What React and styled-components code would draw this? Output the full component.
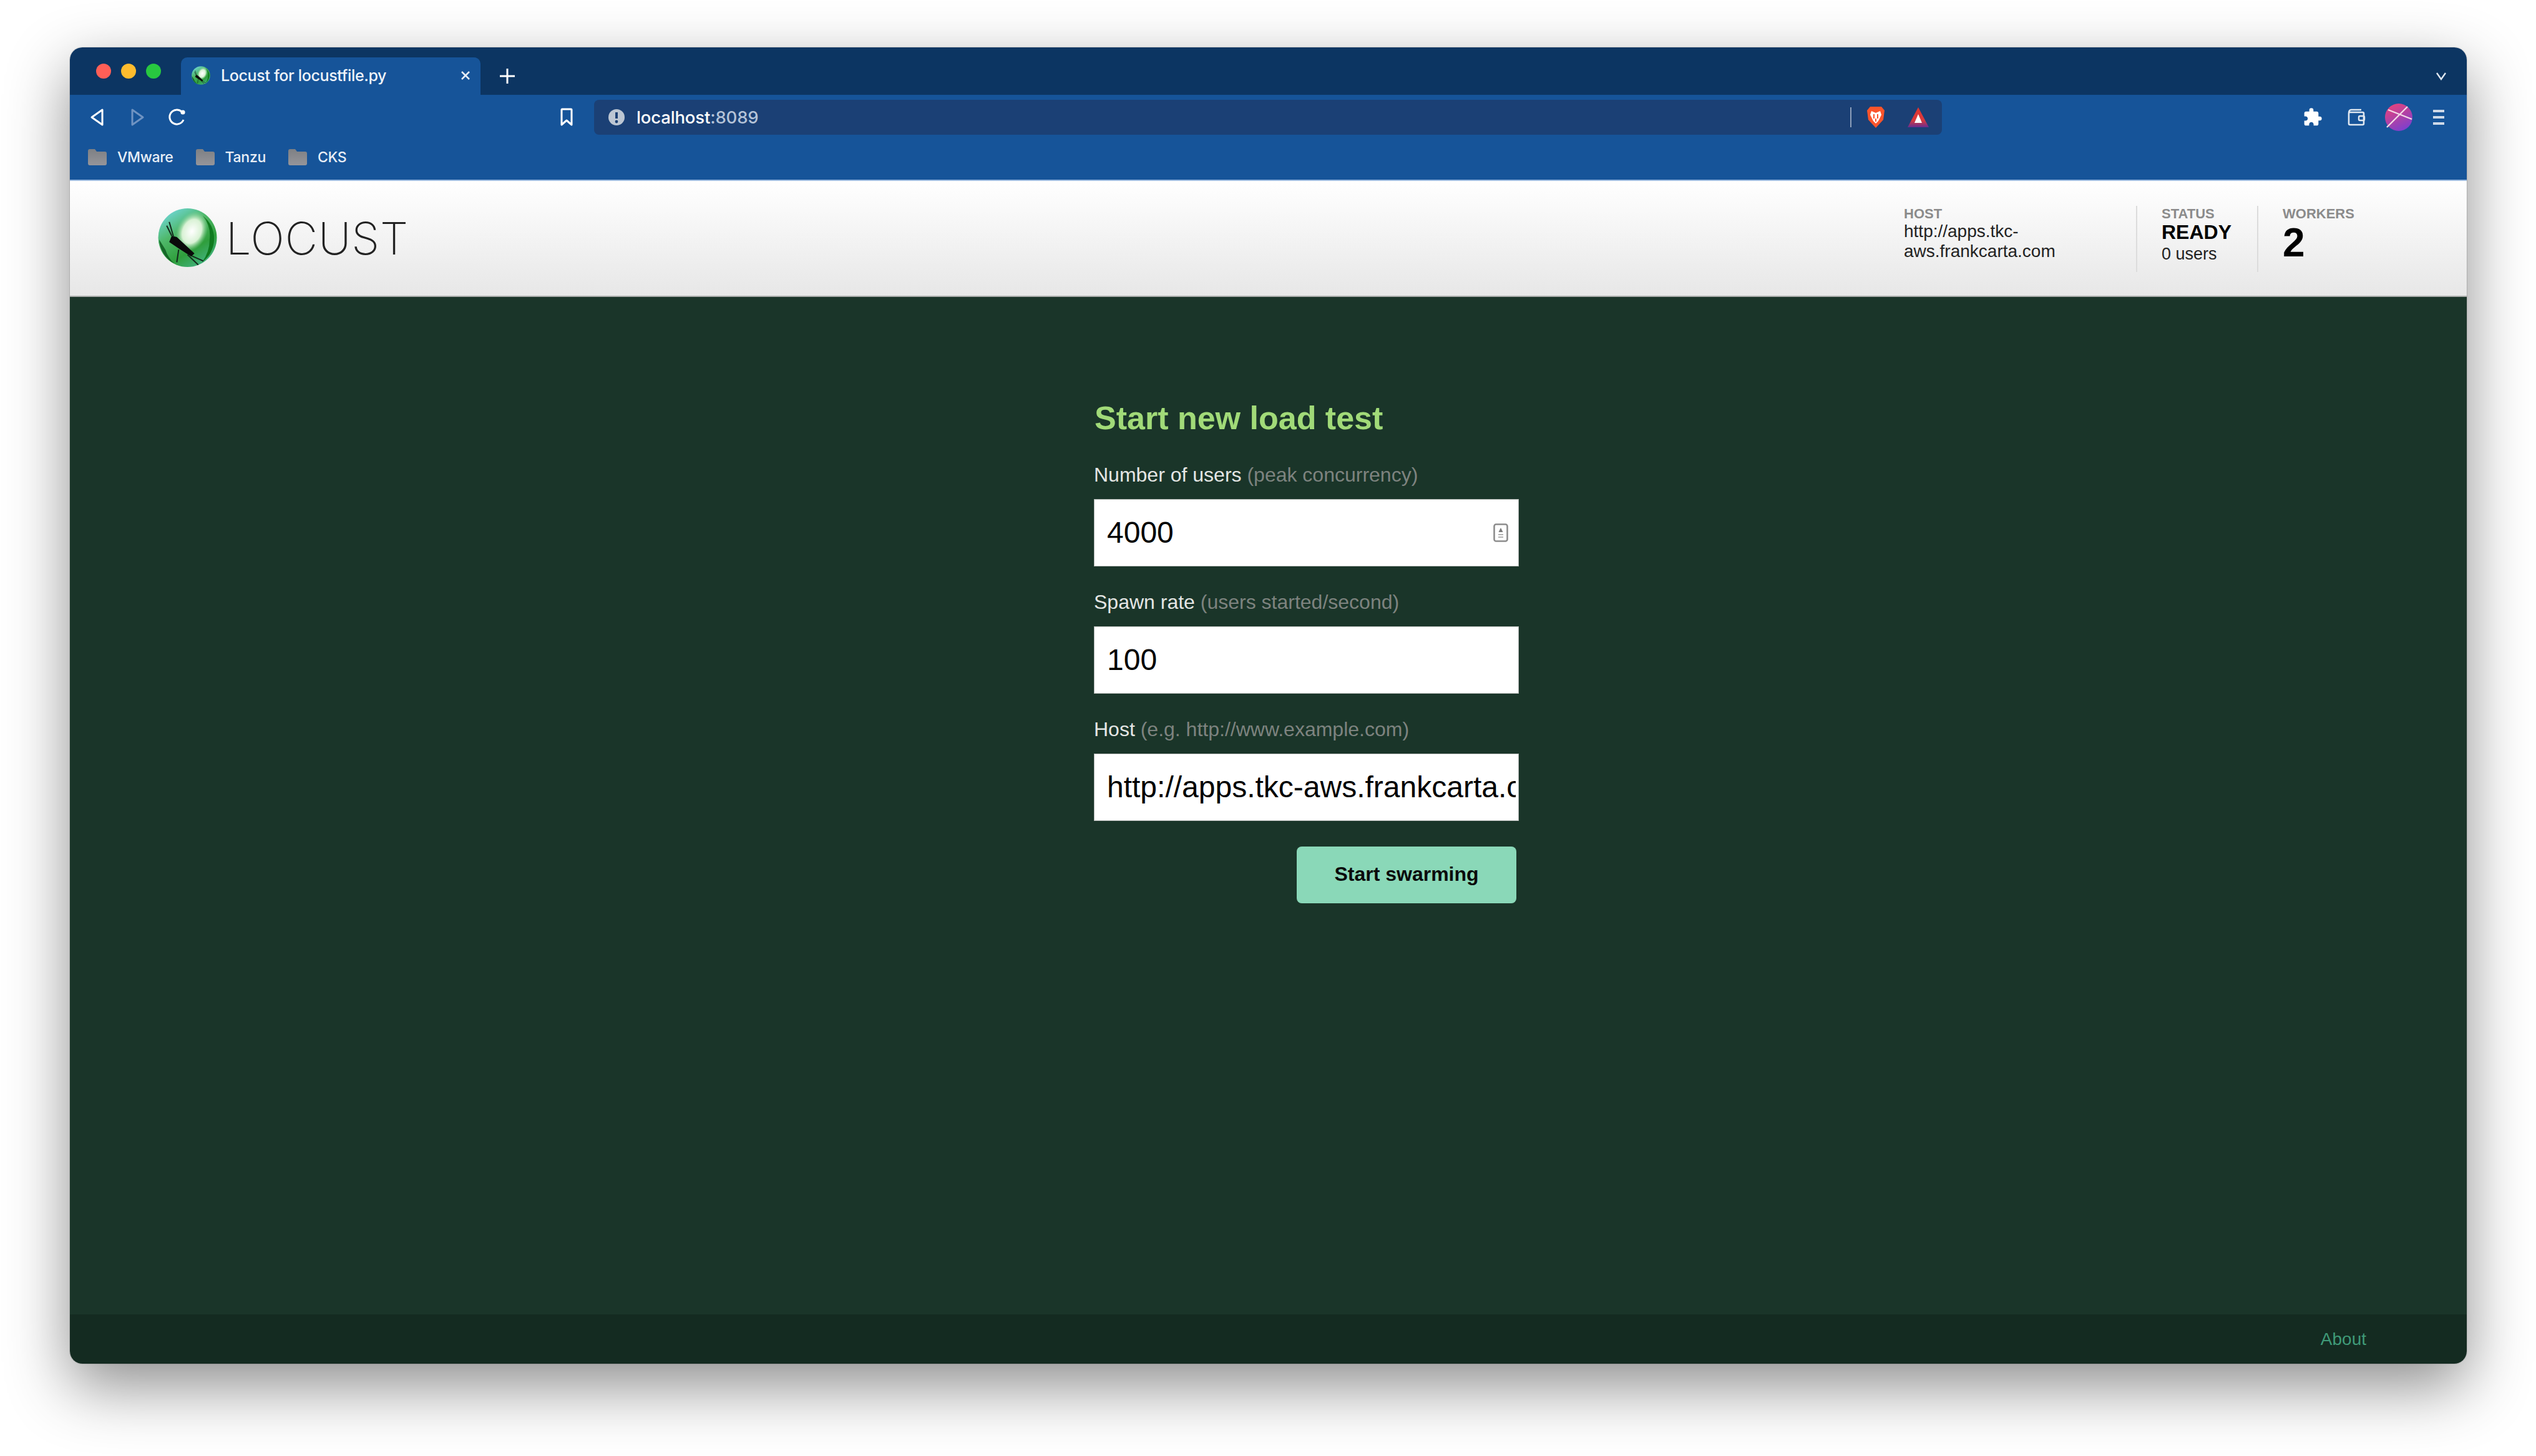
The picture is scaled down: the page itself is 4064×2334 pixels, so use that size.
import React from 'react';
import styled, { createGlobalStyle } from 'styled-components';
import { MdExtension } from 'react-icons/md';

const GlobalStyle = createGlobalStyle`
  html, body {
    margin: 0;
    background: #fff;
  }
  * {
    box-sizing: border-box;
  }
`;

const Page = styled.div`
  width: 4064px;
  height: 2334px;
  padding: 76px 111px 148px 112px;
  background: #fff;
  font-family: 'Liberation Sans', Arial, sans-serif;
`;

const Window = styled.div`
  width: 100%;
  height: 100%;
  display: flex;
  flex-direction: column;
  border-radius: 20px;
  overflow: hidden;
  box-shadow: 0 36px 100px rgba(0, 0, 0, 0.45), 0 0 0 1px rgba(0, 0, 0, 0.12);
`;

/* browser chrome */
const TabStrip = styled.div`
  height: 76px;
  flex: none;
  display: flex;
  padding: 16px 31px 0 42px;
  background: #0c3562;
  color: #fff;
`;

const Lights = styled.div`
  display: flex;
  gap: 16px;
  margin: 10px 32px 0 0;
`;

const Light = styled.span`
  width: 24px;
  height: 24px;
  border-radius: 50%;
  background: ${(p) => p.$color};
`;

const Tab = styled.div`
  width: 480px;
  display: flex;
  align-items: center;
  gap: 17px;
  padding: 0 14px 2px 17px;
  background: #165499;
  border-radius: 10px 10px 0 0;
`;

const TabTitle = styled.span`
  font: 500 25px 'Inter', sans-serif;
  letter-spacing: -0.35px;
  color: #eef3f9;
  white-space: nowrap;
`;

const TabClose = styled.svg`
  width: 20px;
  height: 20px;
  margin-left: auto;
`;

const NewTab = styled.svg`
  width: 26px;
  height: 26px;
  margin: 0 0 0 30px;
  align-self: center;
`;

const TabChevron = styled.svg`
  width: 20px;
  height: 14px;
  margin-left: auto;
  align-self: center;
`;

const Toolbar = styled.div`
  height: 72px;
  flex: none;
  display: flex;
  align-items: center;
  padding: 0 12px;
  background: #165499;
`;

const LeftCluster = styled.div`
  width: 828px;
  display: flex;
  align-items: center;
  padding-right: 12px;
`;

const Slot = styled.div`
  width: ${(p) => p.$w || 64}px;
  display: flex;
  align-items: center;
  justify-content: center;
  color: #fff;
`;

const BookmarkSlot = styled(Slot)`
  margin-left: auto;
`;

const UrlBar = styled.div`
  width: 2160px;
  height: 56px;
  display: flex;
  align-items: center;
  padding: 0 21px 0 22px;
  border-radius: 8px;
  background: #1b4075;
`;

const UrlText = styled.span`
  margin-left: 18px;
  font: 500 27.5px 'Inter', sans-serif;
  letter-spacing: -0.15px;
  color: #fff;
`;

const UrlPort = styled.span`
  color: #b4c3d8;
`;

const UrlDivider = styled.span`
  width: 2px;
  height: 32px;
  margin-left: auto;
  background: #8d9fba;
`;

const BraveIcon = styled.svg`
  width: 30px;
  height: 36px;
  margin-left: 24px;
`;

const RewardsIcon = styled.svg`
  width: 34px;
  height: 32px;
  margin-left: 36px;
`;

const RightCluster = styled.div`
  flex: 1;
  display: flex;
  justify-content: flex-end;
`;

const BookmarksBar = styled.div`
  height: 66px;
  flex: none;
  display: flex;
  align-items: center;
  gap: 36px;
  padding: 0 0 8px 29px;
  background: #165499;
  border-bottom: 2px solid #9dbbe0;
`;

const Bookmark = styled.div`
  display: flex;
  align-items: center;
  gap: 17px;
  font: 500 23px 'Inter', sans-serif;
  letter-spacing: -0.3px;
  color: #e8eef6;
`;

/* locust header */
const Header = styled.header`
  height: 186px;
  flex: none;
  display: flex;
  padding: 40px 0 0 141px;
  background: linear-gradient(#ffffff, #e7e7e7);
  border-bottom: 2px solid #aeb0ae;
`;

const Logo = styled.div`
  display: flex;
  align-items: center;
  gap: 14px;
  height: 102px;
`;

const LogoMark = styled.svg`
  width: 95px;
  height: 96px;
`;

const LogoText = styled.span`
  font: 200 72px 'Inter', sans-serif;
  letter-spacing: 1px;
  color: #222;
`;

const Stats = styled.div`
  display: flex;
  margin-left: auto;
  height: 106px;
`;

const Stat = styled.div`
  width: ${(p) => p.$w}px;
  padding-left: ${(p) => (p.$first ? 0 : 39)}px;
  border-left: ${(p) => (p.$first ? 'none' : '2px solid #dcdcdc')};
`;

const StatLabel = styled.div`
  height: 25px;
  line-height: 25px;
  font-size: 22px;
  font-weight: 700;
  color: #8b8b8b;
`;

const HostValue = styled.div`
  width: 262px;
  font-size: 28px;
  line-height: 32px;
  color: #222;
`;

const StatusValue = styled.div`
  font-size: 32px;
  line-height: 34px;
  font-weight: 700;
  color: #000;
`;

const UsersValue = styled.div`
  margin-top: 2px;
  font-size: 27px;
  line-height: 32px;
  color: #222;
`;

const WorkersValue = styled.div`
  font-size: 64px;
  line-height: 68px;
  font-weight: 700;
  color: #000;
`;

/* form */
const Main = styled.main`
  flex: 1;
  padding: 164px 0 0 1641px;
  background: #1a3529;
`;

const Form = styled.form`
  width: 681px;
  display: flex;
  flex-direction: column;
`;

const Title = styled.h2`
  margin: 0 0 41px;
  padding-left: 1px;
  font-size: 52px;
  line-height: 60px;
  font-weight: 700;
  color: #a1da78;
`;

const Field = styled.div`
  margin-bottom: 37px;
`;

const Label = styled.label`
  display: block;
  margin-bottom: 19px;
  font-size: 32px;
  line-height: 40px;
  color: #e4e6e4;
`;

const Hint = styled.span`
  color: #7d837f;
`;

const InputWrap = styled.div`
  position: relative;
`;

const Input = styled.input`
  display: block;
  width: 100%;
  height: 108px;
  padding: 0 4px 2px 20px;
  border: 1px solid #b4b8b5;
  border-radius: 0;
  background: #fff;
  outline: none;
  font: 400 48px 'Liberation Sans', Arial, sans-serif;
  color: #000;
`;

const StepperIcon = styled.svg`
  position: absolute;
  top: 39px;
  right: 17px;
  width: 24px;
  height: 30px;
`;

const Submit = styled.button`
  align-self: flex-end;
  width: 352px;
  height: 91px;
  margin: 4px 4px 0 0;
  padding: 0 0 3px;
  border: none;
  border-radius: 8px;
  background: #8ad8b8;
  font: 700 32px 'Liberation Sans', Arial, sans-serif;
  color: #0b0b0b;
`;

const Footer = styled.footer`
  height: 79px;
  flex: none;
  display: flex;
  align-items: center;
  justify-content: flex-end;
  padding-right: 161px;
  background: #142b21;
`;

const About = styled.a`
  font-size: 28px;
  color: #3f9a78;
`;

const LocustMark = ({ id }) => (
  <>
    <defs>
      <linearGradient id={`${id}-base`} x1="0.15" y1="0.05" x2="0.75" y2="1">
        <stop offset="0" stopColor="#6fd6d6" />
        <stop offset="0.35" stopColor="#4fb86a" />
        <stop offset="0.7" stopColor="#2f9e3c" />
        <stop offset="1" stopColor="#45b487" />
      </linearGradient>
      <radialGradient id={`${id}-glow`} cx="0.5" cy="0.5" r="0.5">
        <stop offset="0" stopColor="#ffffff" />
        <stop offset="0.6" stopColor="#d9f2d5" />
        <stop offset="1" stopColor="#8fd49a" stopOpacity="0" />
      </radialGradient>
    </defs>
    <circle cx="47" cy="47" r="46.5" fill={`url(#${id}-base)`} />
    <path d="M71 12 A46 46 0 0 1 70 86 A60 60 0 0 0 82 50 A50 50 0 0 0 71 12Z" fill="#0f7a1e" />
    <path d="M2 50 A46 46 0 0 0 26 88 A50 50 0 0 1 12 66Z" fill="#0e5a20" opacity="0.85" />
    <ellipse cx="54" cy="37" rx="24" ry="33" transform="rotate(24 54 37)" fill={`url(#${id}-glow)`} />
    <path d="M22 44 L30 46 L58 72 L53 77 L33 64 L18 54Z" fill="#0a0a0a" />
    <g stroke="#13281c" strokeWidth="2" fill="none">
      <path d="M25 46 L18 22" />
      <path d="M22 44 L14 28" />
      <path d="M33 66 L30 86" />
      <path d="M47 74 L64 90" />
      <path d="M54 76 L72 84" />
    </g>
  </>
);

const Folder = () => (
  <svg width="30" height="26" viewBox="0 0 30 26">
    <defs>
      <linearGradient id="folder" x1="0" y1="0" x2="0" y2="1">
        <stop offset="0" stopColor="#7e8084" />
        <stop offset="1" stopColor="#95959a" />
      </linearGradient>
    </defs>
    <path d="M0 3 Q0 0 3 0 H11 L14 4 H27 Q30 4 30 7 V23 Q30 26 27 26 H3 Q0 26 0 23Z" fill="url(#folder)" />
  </svg>
);

const FormField = ({ label, hint, value, stepper }) => (
  <Field>
    <Label>
      {label} <Hint>{hint}</Hint>
    </Label>
    <InputWrap>
      <Input readOnly value={value} />
      {stepper && (
        <StepperIcon viewBox="0 0 24 30">
          <rect x="1.5" y="1.5" width="21" height="27" rx="3" fill="#fff" stroke="#8c8c8c" strokeWidth="2.6" />
          <path d="M12 7 L15.5 14 H8.5Z" fill="#7c7c7c" />
          <path d="M8 18 H16 M8 22 H16" stroke="#b4b4b4" strokeWidth="2" />
        </StepperIcon>
      )}
    </InputWrap>
  </Field>
);

export default function App() {
  return (
    <Page>
      <GlobalStyle />
      <Window>
        <TabStrip>
          <Lights>
            <Light $color="#ff5f57" />
            <Light $color="#febc2e" />
            <Light $color="#28c840" />
          </Lights>
          <Tab>
            <svg width="30" height="30" viewBox="0 0 94 94">
              <LocustMark id="fav" />
            </svg>
            <TabTitle>Locust for locustfile.py</TabTitle>
            <TabClose viewBox="0 0 20 20">
              <path d="M4 4 L16 16 M16 4 L4 16" stroke="#e6edf5" strokeWidth="2.6" />
            </TabClose>
          </Tab>
          <NewTab viewBox="0 0 26 26">
            <path d="M13 1 V25 M1 13 H25" stroke="#fff" strokeWidth="3" />
          </NewTab>
          <TabChevron viewBox="0 0 20 14">
            <path d="M3 2 L10 12 L17 2" fill="none" stroke="#dfe7f0" strokeWidth="2.4" />
          </TabChevron>
        </TabStrip>

        <Toolbar>
          <LeftCluster>
            <Slot>
              <svg width="26" height="30" viewBox="0 0 26 30">
                <path d="M21 3 V27 L4 15Z" fill="none" stroke="#fff" strokeWidth="3" strokeLinejoin="round" />
              </svg>
            </Slot>
            <Slot>
              <svg width="26" height="30" viewBox="0 0 26 30">
                <path d="M5 3 V27 L22 15Z" fill="none" stroke="#6f93c2" strokeWidth="3" strokeLinejoin="round" />
              </svg>
            </Slot>
            <Slot>
              <svg width="30" height="30" viewBox="0 0 30 30">
                <path d="M25 19 A11.5 11.5 0 1 1 22 6" fill="none" stroke="#fff" strokeWidth="3" />
                <circle cx="24" cy="7" r="3.6" fill="#fff" />
              </svg>
            </Slot>
            <BookmarkSlot>
              <svg width="22" height="30" viewBox="0 0 22 30">
                <path d="M3 3 Q3 2 4 2 H18 Q19 2 19 3 V27 L11 20 L3 27Z" fill="none" stroke="#fff" strokeWidth="3" strokeLinejoin="round" />
              </svg>
            </BookmarkSlot>
          </LeftCluster>
          <UrlBar>
            <svg width="28" height="28" viewBox="0 0 28 28">
              <circle cx="14" cy="14" r="13" fill="#bcc6d3" />
              <path d="M14 6 V16" stroke="#1b4075" strokeWidth="4" />
              <circle cx="14" cy="21" r="2.4" fill="#1b4075" />
            </svg>
            <UrlText>
              localhost<UrlPort>:8089</UrlPort>
            </UrlText>
            <UrlDivider />
            <BraveIcon viewBox="0 0 30 36">
              <path d="M6 1 H24 L29 7 L27 22 L15 35 L3 22 L1 7Z" fill="#fb542b" />
              <path d="M8 8 L15 11 L22 8 L24 14 L19 24 L15 28 L11 24 L6 14Z" fill="#fff" />
              <path d="M12 13 V20 M18 13 V20 M15 20 V25" stroke="#fb542b" strokeWidth="2" />
            </BraveIcon>
            <RewardsIcon viewBox="0 0 34 32">
              <defs>
                <linearGradient id="rewards" x1="0" y1="0" x2="0" y2="1">
                  <stop offset="0" stopColor="#e0352f" />
                  <stop offset="0.65" stopColor="#d83a3e" />
                  <stop offset="1" stopColor="#662d91" />
                </linearGradient>
              </defs>
              <path d="M17 0 L34 32 H0Z" fill="url(#rewards)" />
              <path d="M17 11 L23 25 H11Z" fill="#fff" />
            </RewardsIcon>
          </UrlBar>
          <RightCluster>
            <Slot $w={63}>
              <MdExtension size={32} color="#fff" />
            </Slot>
            <Slot $w={77}>
              <svg width="32" height="28" viewBox="0 0 32 28">
                <path d="M4 8 V24 Q4 26 6 26 H26 Q28 26 28 24 V8 Q28 6 26 6 H6 Q4 6 4 8 M4 8 Q4 2 8 2 H24" fill="none" stroke="#dfe7f0" strokeWidth="2.6" />
                <rect x="20" y="12" width="9" height="7" rx="2" fill="none" stroke="#dfe7f0" strokeWidth="2.4" />
              </svg>
            </Slot>
            <Slot $w={60}>
              <svg width="44" height="44" viewBox="0 0 44 44">
                <defs>
                  <linearGradient id="avatar" x1="0.2" y1="0" x2="0.7" y2="1">
                    <stop offset="0" stopColor="#e8437a" />
                    <stop offset="1" stopColor="#7a3fd0" />
                  </linearGradient>
                </defs>
                <circle cx="22" cy="22" r="22" fill="url(#avatar)" />
                <path d="M5 10 L43 25 M36 5 L3 38" stroke="#f3d9e6" strokeWidth="2.4" />
              </svg>
            </Slot>
            <Slot $w={67}>
              <svg width="20" height="26" viewBox="0 0 20 26">
                <path d="M1 3 H19 M1 13 H19 M1 23 H19" stroke="#ced9e8" strokeWidth="4" />
              </svg>
            </Slot>
          </RightCluster>
        </Toolbar>

        <BookmarksBar>
          {['VMware', 'Tanzu', 'CKS'].map((name) => (
            <Bookmark key={name}>
              <Folder />
              {name}
            </Bookmark>
          ))}
        </BookmarksBar>

        <Header>
          <Logo>
            <LogoMark viewBox="0 0 94 94">
              <LocustMark id="logo" />
            </LogoMark>
            <LogoText>LOCUST</LogoText>
          </Logo>
          <Stats>
            <Stat $first $w={372}>
              <StatLabel>HOST</StatLabel>
              <HostValue>http://apps.tkc-aws.frankcarta.com</HostValue>
            </Stat>
            <Stat $w={194}>
              <StatLabel>STATUS</StatLabel>
              <StatusValue>READY</StatusValue>
              <UsersValue>0 users</UsersValue>
            </Stat>
            <Stat $w={336}>
              <StatLabel>WORKERS</StatLabel>
              <WorkersValue>2</WorkersValue>
            </Stat>
          </Stats>
        </Header>

        <Main>
          <Form>
            <Title>Start new load test</Title>
            <FormField label="Number of users" hint="(peak concurrency)" value="4000" stepper />
            <FormField label="Spawn rate" hint="(users started/second)" value="100" />
            <FormField label="Host" hint="(e.g. http://www.example.com)" value="http://apps.tkc-aws.frankcarta.com" />
            <Submit type="button">Start swarming</Submit>
          </Form>
        </Main>

        <Footer>
          <About>About</About>
        </Footer>
      </Window>
    </Page>
  );
}
